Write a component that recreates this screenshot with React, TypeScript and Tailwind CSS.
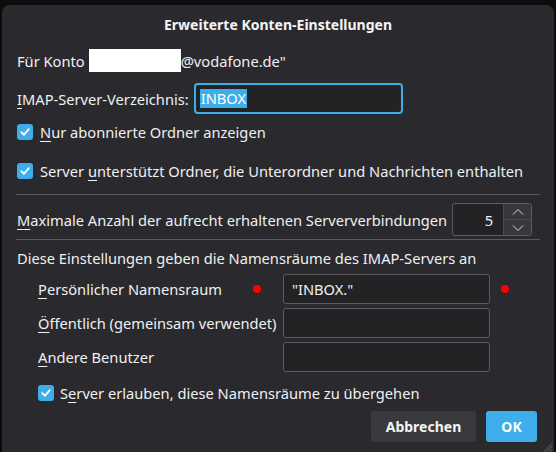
import React from "react";

const font = { fontFamily: '"Noto Sans", "Open Sans", sans-serif' };

function Check() {
  return (
    <div className="w-[16px] h-[16px] rounded-[3px] bg-[#3daee9] flex items-center justify-center shrink-0">
      <svg width="12" height="12" viewBox="0 0 12 12">
        <path d="M2.3 6.2 L4.9 8.8 L9.8 3.2" fill="none" stroke="#ffffff" strokeWidth="1.8" strokeLinecap="round" strokeLinejoin="round" />
      </svg>
    </div>
  );
}

function U({ children }: { children: React.ReactNode }) {
  return <span className="underline underline-offset-[3px] decoration-1">{children}</span>;
}

function Dot() {
  return <div className="w-[8px] h-[8px] rounded-full bg-[#ff0000]" />;
}

function Field({ value }: { value?: string }) {
  return (
    <div className="w-[207px] h-[30px] rounded-[3px] border border-[#5c5c60] bg-[#232326] flex items-center px-[8px] text-[14.67px] text-[#f0f0f0]">
      {value}
    </div>
  );
}

export default function App() {
  return (
    <div className="w-[556px] h-[452px] bg-[#0c0c0d] pt-[5px] px-[2px] overflow-hidden" style={font}>
      <div className="relative h-[447px] bg-[#2a2a2e] rounded-t-[8px] px-[15px] flex flex-col text-[14.67px] text-[#eff0f1]">
        <div className="h-[38px] flex items-center justify-center font-bold text-[14px] text-[#f4f4f4]">
          Erweiterte Konten-Einstellungen
        </div>

        <div className="mt-[6px] h-[23px] flex items-center whitespace-nowrap">
          <span>Für Konto</span>
          <div className="ml-[4px] w-[92px] h-[23px] bg-white" />
          <span>@vodafone.de"</span>
        </div>

        <div className="mt-[11px] h-[31px] flex items-center whitespace-nowrap">
          <span><U>I</U>MAP-Server-Verzeichnis:</span>
          <div className="ml-[5px] w-[209px] h-[31px] rounded-[4px] border-2 border-[#3daee9] bg-[#232326] flex items-center pl-[4px]">
            <span className="bg-[#3daee9] text-white px-[1px] leading-[19px]">INBOX</span>
          </div>
        </div>

        <div className="mt-[6px] h-[24px] flex items-center gap-[7px]">
          <Check />
          <span><U>N</U>ur abonnierte Ordner anzeigen</span>
        </div>

        <div className="mt-[15px] h-[24px] flex items-center gap-[7px] whitespace-nowrap">
          <Check />
          <span>Server <U>u</U>nterstützt Ordner, die Unterordner und Nachrichten enthalten</span>
        </div>

        <div className="mt-[11px] h-px bg-[#5a5a5e] -mx-[1px]" />

        <div className="mt-[8px] h-[33px] flex items-center whitespace-nowrap">
          <span><U>M</U>aximale Anzahl der aufrecht erhaltenen Serververbindungen</span>
          <div className="ml-[5px] w-[80px] h-[33px] rounded-[3px] border border-[#5c5c60] bg-[#232326] flex">
            <div className="flex-1 flex items-center justify-end pr-[10px] text-[#f0f0f0]">5</div>
            <div className="w-[28px] flex flex-col border-l border-[#4a4a4e]">
              <div className="flex-1 flex items-center justify-center bg-[#38383c] border-b border-[#4a4a4e] rounded-tr-[2px]">
                <svg width="12" height="8" viewBox="0 0 12 8">
                  <path d="M1 6.5 L6 1.5 L11 6.5" fill="none" stroke="#d8d8da" strokeWidth="1" />
                </svg>
              </div>
              <div className="flex-1 flex items-center justify-center bg-[#38383c] rounded-br-[2px]">
                <svg width="12" height="8" viewBox="0 0 12 8">
                  <path d="M1 1.5 L6 6.5 L11 1.5" fill="none" stroke="#d8d8da" strokeWidth="1" />
                </svg>
              </div>
            </div>
          </div>
        </div>

        <div className="mt-[3px] h-px bg-[#5a5a5e] -mx-[1px]" />

        <div className="mt-[8px] h-[20px] flex items-center whitespace-nowrap">
          Diese Einstellungen geben die Namensräume des IMAP-Servers an
        </div>

        <div className="mt-[6px] pl-[21px] flex flex-col gap-[4px]">
          <div className="grid grid-cols-[215px_8px_22px_207px_11px_8px] items-center h-[30px] whitespace-nowrap">
            <span><U>P</U>ersönlicher Namensraum</span>
            <Dot />
            <span />
            <Field value={'"INBOX."'} />
            <span />
            <Dot />
          </div>
          <div className="grid grid-cols-[215px_8px_22px_207px] items-center h-[30px] whitespace-nowrap">
            <span className="col-span-3"><U>Ö</U>ffentlich (gemeinsam verwendet)</span>
            <Field />
          </div>
          <div className="grid grid-cols-[215px_8px_22px_207px] items-center h-[30px] whitespace-nowrap">
            <span className="col-span-3"><U>A</U>ndere Benutzer</span>
            <Field />
          </div>
        </div>

        <div className="mt-[9px] h-[24px] pl-[21px] flex items-center gap-[6px] whitespace-nowrap">
          <Check />
          <span>S<U>e</U>rver erlauben, diese Namensräume zu übergehen</span>
        </div>

        <div className="mt-[6px] flex justify-end gap-[10px] pr-[2px]">
          <button className="h-[31px] w-[105px] rounded-[3px] bg-[#3a3a3e] font-bold text-[14px] text-[#f4f4f4]">
            Abbrechen
          </button>
          <button className="h-[31px] w-[51px] rounded-[3px] bg-[#3daee9] font-bold text-[14px] text-white">
            OK
          </button>
        </div>

        <svg className="absolute right-[1px] bottom-[0px]" width="10" height="10" viewBox="0 0 10 10">
          <path d="M9.5 1 L1 9.5 M9.5 4 L4 9.5 M9.5 7 L7 9.5" stroke="#6a6a6e" strokeWidth="1" />
        </svg>
      </div>
    </div>
  );
}
